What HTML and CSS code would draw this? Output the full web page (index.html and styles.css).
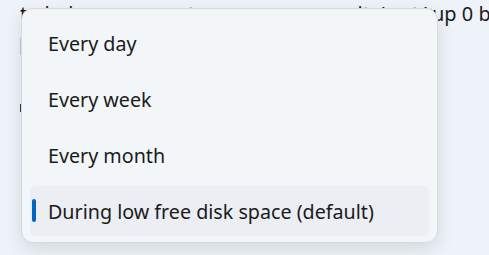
FILE: index.html
```html
<!DOCTYPE html>
<html>
<head>
    <title>Storage Sense</title>
    <link rel="stylesheet" href="styles.css">
</head>
<body>
<div class="page">
    <p class="summary">
        <span class="summary-main">to help you save storage space, run it. Last Week we cleaned</span>
        <span>up 0 bytes</span>
    </p>
    <div class="row-edge"></div>
    <div class="row-edge dot"></div>
</div>
<div class="menu">
    <ul>
        <li>Every day</li>
        <li>Every week</li>
        <li>Every month</li>
        <li class="selected">During low free disk space (default)</li>
    </ul>
</div>
</body>
</html>
```

FILE: styles.css
```css
body {
    margin: 0;
    padding: 0;
    background-color: #eef2f9;
    font-family: "Noto Sans", "Open Sans", sans-serif;
    color: #1b1b1b;
    overflow: hidden;
}

.page {
    padding: 0 0 0 20px;
    height: 255px;
    box-sizing: border-box;
}

.summary {
    margin: 0;
    display: flex;
    font-size: 20px;
    line-height: 28px;
    white-space: nowrap;
}

.summary-main {
    flex: 0 0 412px;
    overflow: hidden;
}

.row-edge {
    width: 2px;
    height: 17px;
    margin-top: 10px;
    background-color: #c9ccd1;
}

.row-edge.dot {
    height: 8px;
    margin-top: 49px;
    background-color: #3a3a3a;
}

/* Меню вибору */
.menu {
    position: absolute;
    top: 8px;
    left: 21px;
    width: 417px;
    height: 235px;
    box-sizing: border-box;
    background-color: #f3f6f9;
    border: 1px solid #d6d9de;
    border-radius: 12px;
    box-shadow: 0 6px 18px rgba(0, 0, 0, 0.11);
    padding: 9px 8px 6px 8px;
}

.menu ul {
    list-style-type: none;
    margin: 0;
    padding: 0;
    display: flex;
    flex-direction: column;
    gap: 6px;
}

.menu li {
    position: relative;
    height: 50px;
    display: flex;
    align-items: center;
    padding-left: 18px;
    border-radius: 6px;
    font-size: 19.7px;
}

.menu li.selected {
    background-color: #ebeef2;
}

.menu li.selected::before {
    content: "";
    position: absolute;
    left: 2px;
    top: 13px;
    width: 4px;
    height: 23px;
    border-radius: 2px;
    background-color: #0067c0;
}
```
